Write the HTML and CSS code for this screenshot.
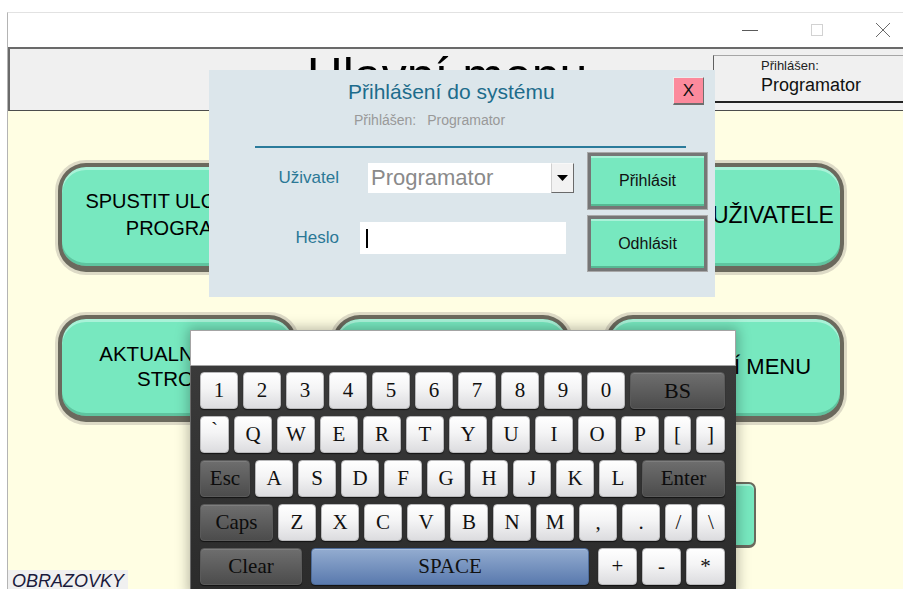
FILE: index.html
```html
<!DOCTYPE html>
<html lang="cs">
<head>
<meta charset="utf-8">
<title>Hlavní menu</title>
<link rel="stylesheet" href="styles.css">
</head>
<body>
<div class="desktop">
  <div class="window">
    <div class="titlebar">
      <span class="wc"><svg width="18" height="18" viewBox="0 0 18 18"><path d="M0 9.5h16" stroke="#5a5a5a" stroke-width="1"/></svg></span>
      <span class="wc"><svg width="18" height="18" viewBox="0 0 18 18"><rect x="3.5" y="3.5" width="11" height="11" fill="none" stroke="#d2d2d2" stroke-width="1"/></svg></span>
      <span class="wc"><svg width="18" height="18" viewBox="0 0 18 18"><path d="M2 2L16 16M16 2L2 16" stroke="#6a6a6a" stroke-width="1"/></svg></span>
    </div>

    <header class="header">
      <h1 class="header-title">Hlavní menu</h1>
      <div class="user-box">
        <div class="user-caption">Přihlášen:</div>
        <div class="user-name">Programator</div>
      </div>
    </header>

    <main class="menu">
      <div class="tiles">
        <button class="tile">SPUSTIT ULOŽENÝ<br>PROGRAM</button>
        <button class="tile">EDITACE<br>PROGRAMU</button>
        <button class="tile tile-wide">SPRÁVA UŽIVATELE</button>
        <button class="tile tile-tight">AKTUALNÍ STAV<br>STROJE</button>
        <button class="tile">NASTAVENÍ<br>STROJE</button>
        <button class="tile tile-wide tile-menu">SERVISNÍ MENU</button>
        <button class="tile tile-small">ZPĚT</button>
      </div>
      <div class="screens-tag">OBRAZOVKY</div>
    </main>
  </div>

  <!-- login dialog -->
  <div class="login">
    <div class="login-head">
      <div class="login-titles">
        <div class="login-title">Přihlášení do systému</div>
        <div class="login-sub"><span>Přihlášen:</span><span>Programator</span></div>
      </div>
      <button class="login-close">X</button>
    </div>
    <div class="login-rule"></div>
    <div class="login-body">
      <div class="fields">
        <div class="field field-user">
          <span class="field-label">Uživatel</span>
          <div class="combo">
            <span class="combo-value">Programator</span>
            <span class="combo-drop"><svg width="11" height="6" viewBox="0 0 11 6"><path d="M0 0h11L5.5 6z" fill="#000"/></svg></span>
          </div>
        </div>
        <div class="field field-pass">
          <span class="field-label">Heslo</span>
          <div class="pass"><span class="caret"></span></div>
        </div>
      </div>
      <div class="actions">
        <button class="act act-in">Přihlásit</button>
        <button class="act act-out">Odhlásit</button>
      </div>
    </div>
  </div>

  <!-- on-screen keyboard -->
  <div class="keyboard">
    <div class="kb-display"></div>
    <div class="kb-pad">
      <div class="kb-row">
        <span class="key">1</span><span class="key">2</span><span class="key">3</span><span class="key">4</span><span class="key">5</span><span class="key">6</span><span class="key">7</span><span class="key">8</span><span class="key">9</span><span class="key">0</span><span class="key key-dark key-bs">BS</span>
      </div>
      <div class="kb-row">
        <span class="key key-tick">`</span><span class="key">Q</span><span class="key">W</span><span class="key">E</span><span class="key">R</span><span class="key">T</span><span class="key">Y</span><span class="key">U</span><span class="key">I</span><span class="key">O</span><span class="key">P</span><span class="key key-n27">[</span><span class="key key-n29">]</span>
      </div>
      <div class="kb-row">
        <span class="key key-dark key-esc">Esc</span><span class="key">A</span><span class="key">S</span><span class="key">D</span><span class="key">F</span><span class="key">G</span><span class="key">H</span><span class="key">J</span><span class="key">K</span><span class="key">L</span><span class="key key-dark key-enter">Enter</span>
      </div>
      <div class="kb-row">
        <span class="key key-dark key-caps">Caps</span><span class="key">Z</span><span class="key">X</span><span class="key">C</span><span class="key">V</span><span class="key">B</span><span class="key">N</span><span class="key">M</span><span class="key">,</span><span class="key">.</span><span class="key key-n27">/</span><span class="key key-n28">\</span>
      </div>
      <div class="kb-row">
        <span class="key key-dark key-clear">Clear</span><span class="key key-space">SPACE</span><span class="key key-op key-plus">+</span><span class="key key-op">-</span><span class="key key-op">*</span>
      </div>
    </div>
  </div>
</div>
</body>
</html>
```
FILE: styles.css
```css
* { box-sizing: border-box; }

html, body {
  margin: 0;
  padding: 0;
}

body {
  width: 903px;
  height: 589px;
  overflow: hidden;
  background: #fff;
  font-family: "Liberation Sans", Arial, sans-serif;
  color: #000;
}

button {
  font-family: inherit;
  cursor: default;
}

.desktop {
  position: relative;
  width: 903px;
  height: 589px;
  padding: 12px 0 0 7px;
}

/* ---------- application window ---------- */
.window {
  height: 577px;
  border-top: 1px solid #e2e2e2;
  border-left: 1px solid #b4b4b4;
  display: flex;
  flex-direction: column;
}

.titlebar {
  height: 34px;
  flex: none;
  background: #fff;
  display: flex;
  justify-content: flex-end;
  align-items: center;
  gap: 48px;
  padding-right: 11px;
}

.wc {
  width: 18px;
  height: 18px;
  display: flex;
}

.header {
  height: 64px;
  flex: none;
  background: #f0f0f0;
  border-top: 2px solid #6a6a6a;
  border-left: 2px solid #6a6a6a;
  border-bottom: 1px solid #4c4c4c;
  display: flex;
  align-items: flex-start;
}

.header-title {
  flex: 1;
  margin: 0;
  padding-left: 171px;
  text-align: center;
  font-weight: normal;
  font-size: 50px;
  line-height: 54px;
  white-space: nowrap;
}

.user-box {
  width: 190px;
  height: 48px;
  margin-top: 6px;
  border-left: 1px solid #606060;
  border-top: 1px solid #a6a6a6;
  border-bottom: 2px solid #222;
  padding-left: 47px;
}

.user-caption {
  font-size: 13px;
  line-height: 15px;
  padding-top: 2px;
  color: #222;
}

.user-name {
  font-size: 18px;
  line-height: 22px;
  padding-top: 1px;
  color: #111;
}

/* ---------- main menu ---------- */
.menu {
  flex: 1;
  min-height: 0;
  background: #fffee3;
  display: flex;
  flex-direction: column;
}

.tiles {
  display: grid;
  grid-template-columns: repeat(3, 245px);
  grid-template-rows: 115px 113px auto;
  column-gap: 28.5px;
  row-gap: 37px;
  padding: 49px 0 0 47px;
}

.tile {
  margin: 3px;
  padding: 0 0 3px;
  border: 4px solid #6b695d;
  border-bottom-width: 6px;
  border-radius: 28px;
  background: #77e8bf;
  box-shadow: 0 0 0 3px #dddac6, inset 0 3px 0 #a9f2d8, inset 0 -3px 0 #5fc49f;
  font-size: 20px;
  line-height: 27px;
  color: #000;
  text-align: center;
}

.tile-tight {
  font-size: 20.5px;
  line-height: 25px;
}

.tile-wide {
  font-size: 23px;
  padding-bottom: 2px;
}

.tile-menu { font-size: 22px; }

.tile-small {
  grid-column: 3;
  justify-self: start;
  width: 154px;
  height: 66px;
  margin: 20px 0 0 0;
  border-width: 2px;
  border-bottom-width: 3px;
  border-radius: 7px;
  box-shadow: inset 0 2px 0 #a9f2d8;
}

.screens-tag {
  margin-top: auto;
  align-self: flex-start;
  flex: none;
  height: 19px;
  padding: 1px 4px 0;
  background: #f0f0f0;
  font-style: italic;
  font-size: 18px;
  line-height: 20px;
  color: #1b1b3c;
  white-space: nowrap;
}

/* ---------- login dialog ---------- */
.login {
  position: absolute;
  left: 209px;
  top: 70px;
  width: 506px;
  height: 227px;
  background: #dce6eb;
}

.login-head {
  height: 76px;
  display: flex;
  align-items: flex-start;
  padding: 7px 11px 0 139px;
}

.login-titles {
  flex: 1;
  padding-top: 3px;
}

.login-title {
  font-size: 21px;
  line-height: 24px;
  color: #1d6c8c;
}

.login-sub {
  margin-top: 8px;
  padding-left: 6px;
  display: flex;
  gap: 11px;
  font-size: 14px;
  line-height: 16px;
  color: #999;
}

.login-close {
  width: 31px;
  height: 28px;
  padding: 0;
  background: #fc8a9c;
  border: 1px solid;
  border-color: #ececec #6e6e6e #6e6e6e #ececec;
  border-bottom-width: 2px;
  font-size: 17px;
  line-height: 24px;
  color: #111;
}

.login-rule {
  height: 2px;
  margin: 0 29px 0 46px;
  background: #2b7b9b;
}

.login-body {
  display: flex;
}

.fields {
  width: 379px;
}

.field {
  display: flex;
  align-items: center;
}

.field-user {
  margin-top: 15px;
  height: 30px;
}

.field-pass {
  margin-top: 29px;
  height: 32px;
}

.field-label {
  width: 130px;
  text-align: right;
  font-size: 17px;
  color: #2b7896;
}

.combo {
  width: 206px;
  height: 30px;
  margin-left: 29px;
  background: #fff;
  display: flex;
  align-items: center;
}

.combo-value {
  flex: 1;
  padding-left: 3px;
  font-size: 22px;
  color: #8a8a8a;
}

.combo-drop {
  width: 23px;
  height: 30px;
  background: #f2f2f2;
  border: 1px solid;
  border-color: #f8f8f8 #6a6a6a #6a6a6a #d0d0d0;
  display: flex;
  align-items: center;
  justify-content: center;
}

.pass {
  width: 206px;
  height: 32px;
  margin-left: 21px;
  background: #fff;
  display: flex;
  align-items: center;
  padding-left: 6px;
}

.caret {
  width: 2px;
  height: 19px;
  background: #000;
}

.actions {
  margin-top: 5px;
  display: flex;
  flex-direction: column;
  gap: 7px;
}

.act {
  width: 119px;
  height: 56px;
  padding: 0;
  background: #77e8bf;
  border: 3px solid #767676;
  box-shadow: 0 0 0 1px #a8a8a8, inset 0 2px 0 #a9f2d8, inset 0 -2px 0 #56b993;
  font-size: 16px;
  color: #111;
}

.act-out { height: 55px; }

/* ---------- on-screen keyboard ---------- */
.keyboard {
  position: absolute;
  left: 190px;
  top: 330px;
  width: 546px;
  height: 264px;
  box-shadow: 0 0 12px 2px rgba(0, 0, 0, 0.28);
}

.kb-display {
  height: 36px;
  background: #fff;
  border: 1px solid #a4a4a4;
}

.kb-pad {
  height: 228px;
  background: linear-gradient(#3a3a3a, #2b2b2b);
  border-left: 1px solid #6a6a6a;
  padding: 6px 10px 0 9px;
  display: flex;
  flex-direction: column;
  gap: 7px;
}

.kb-row {
  display: flex;
  gap: 5px;
  height: 37px;
}

.key {
  flex: none;
  width: 38px;
  height: 37px;
  border-radius: 4px;
  border: 1px solid #b9b9bb;
  background: linear-gradient(#ffffff 0%, #f4f4f5 45%, #dcdcdf 100%);
  box-shadow: 0 1px 1px rgba(0, 0, 0, 0.6);
  font-family: "Liberation Serif", "Times New Roman", serif;
  font-size: 21px;
  line-height: 35px;
  text-align: center;
  color: #111;
}

.key-dark {
  border-color: #5a5a5a;
  background: linear-gradient(#6e6e6e, #4c4c4c);
  box-shadow: inset 0 1px 0 #7e7e7e, 0 1px 1px rgba(0, 0, 0, 0.6);
  color: #0c0c0c;
}

.key-bs { width: 95px; font-size: 22px; }
.key-tick { width: 29px; line-height: 26px; }
.key-n27 { width: 27px; }
.key-n28 { width: 28px; }
.key-n29 { width: 29px; }
.key-esc { width: 50px; }
.key-enter { width: 83px; }
.key-caps { width: 73px; }
.key-clear { width: 102px; }

.key-space {
  width: 278px;
  margin-left: 4px;
  border-color: #4e6c9a;
  background: linear-gradient(#93acd0, #5a7aae);
  box-shadow: inset 0 1px 0 #a7bddb, 0 1px 1px rgba(0, 0, 0, 0.6);
}

.key-op { width: 39px; }
.key-plus { margin-left: 4px; }
```
